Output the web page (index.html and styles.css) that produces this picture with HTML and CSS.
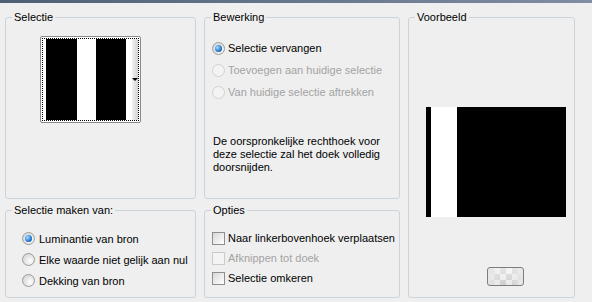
FILE: index.html
```html
<!DOCTYPE html>
<html lang="nl">
<head>
    <meta charset="UTF-8">
    <title>Selectie uit masker</title>
    <link rel="stylesheet" href="styles.css">
</head>
<body>
    <div class="titlebar"></div>

    <div class="dialog">
        <!-- Selectie -->
        <fieldset class="group">
            <legend>Selectie</legend>
            <div class="thumb">
                <div class="thumb-focus">
                    <span class="stripe black w31"></span>
                    <span class="stripe white w19"></span>
                    <span class="stripe black w30"></span>
                    <span class="stripe white w6"></span>
                    <span class="thumb-drop"><span class="arrow"></span></span>
                </div>
            </div>
        </fieldset>

        <!-- Bewerking -->
        <fieldset class="group">
            <legend>Bewerking</legend>
            <div class="choices top-13">
                <div class="choice"><span class="radio checked"></span>Selectie vervangen</div>
                <div class="choice disabled"><span class="radio"></span>Toevoegen aan huidige selectie</div>
                <div class="choice disabled"><span class="radio"></span>Van huidige selectie aftrekken</div>
            </div>
            <p class="note">De oorspronkelijke rechthoek voor deze selectie zal het doek volledig doorsnijden.</p>
        </fieldset>

        <!-- Voorbeeld -->
        <fieldset class="group preview-group">
            <legend>Voorbeeld</legend>
            <div class="preview">
                <span class="preview-stripe"></span>
            </div>
            <div class="swatch-btn"></div>
        </fieldset>

        <!-- Selectie maken van -->
        <fieldset class="group">
            <legend>Selectie maken van:</legend>
            <div class="choices source">
                <div class="choice"><span class="radio checked"></span>Luminantie van bron</div>
                <div class="choice"><span class="radio"></span>Elke waarde niet gelijk aan nul</div>
                <div class="choice"><span class="radio"></span>Dekking van bron</div>
            </div>
        </fieldset>

        <!-- Opties -->
        <fieldset class="group">
            <legend>Opties</legend>
            <div class="choices checks">
                <div class="choice"><span class="check"></span>Naar linkerbovenhoek verplaatsen</div>
                <div class="choice disabled"><span class="check"></span>Afknippen tot doek</div>
                <div class="choice"><span class="check"></span>Selectie omkeren</div>
            </div>
        </fieldset>
    </div>
</body>
</html>
```

FILE: styles.css
```css
/* General */
body {
    margin: 0;
    background: #efefef;
    font-family: "Liberation Sans", Arial, sans-serif;
    font-size: 11px;
    color: #000;
}

.titlebar {
    height: 3px;
    background: linear-gradient(to right, #4f5f74, #7f8ea2);
}

/* Dialog layout */
.dialog {
    display: grid;
    grid-template-columns: 191px 196px 167px;
    grid-template-rows: 188px 94px;
    column-gap: 8px;
    row-gap: 5px;
    padding: 8px 0 0 5px;
}

.group {
    margin: 0;
    padding: 0;
    min-width: 0;
    border: 1px solid #cbd3db;
    border-radius: 3px;
}

.group legend {
    margin-left: 6px;
    padding: 0 2px;
    line-height: 13px;
}

.preview-group {
    grid-column: 3;
    grid-row: 1 / span 2;
}

/* Selectie thumbnail */
.thumb {
    width: 101px;
    height: 87px;
    box-sizing: border-box;
    margin: 12px 0 0 34px;
    padding: 1px;
    border: 1px solid #8a8a8a;
    border-radius: 2px;
    background: #fff;
}

.thumb-focus {
    display: flex;
    height: 100%;
    box-sizing: border-box;
    padding-left: 3px;
    border: 1px dotted #000;
}

.stripe { height: 100%; }
.stripe.black { background: #000; }
.stripe.white { background: #fff; }
.w31 { width: 31px; }
.w30 { width: 30px; }
.w19 { width: 19px; }
.w6 { width: 6px; }

.thumb-drop {
    width: 6px;
    display: flex;
    align-items: center;
    justify-content: center;
    background: linear-gradient(to right, #f2f2f2, #d2d2d2);
}

.arrow {
    width: 0;
    height: 0;
    border-left: 3px solid transparent;
    border-right: 3px solid transparent;
    border-top: 3px solid #000;
}

/* Radio and check rows */
.choices { padding-left: 7px; }
.top-13 { margin-top: 13px; }
.source { margin-top: 11px; padding-left: 16px; }
.checks { margin-top: 11px; }

.choice {
    display: flex;
    align-items: center;
    gap: 3px;
    height: 22px;
    white-space: nowrap;
}

.source .choice { height: 21px; gap: 4px; }
.checks .choice { height: 20px; }

.choice.disabled { color: #a3a3a3; }

.radio {
    width: 13px;
    height: 13px;
    box-sizing: border-box;
    border: 1px solid #9c9c9c;
    border-radius: 50%;
    background: radial-gradient(circle at 65% 65%, #ffffff, #e2e2e2 55%, #cfcfcf);
    display: flex;
    align-items: center;
    justify-content: center;
}

.radio.checked::after {
    content: "";
    width: 7px;
    height: 7px;
    border-radius: 50%;
    background: radial-gradient(circle at 35% 35%, #a6deff, #2a7fd6 55%, #0b4c9c 85%, rgba(11, 76, 156, 0.4));
}

.disabled .radio {
    border-color: #d2d2d2;
    background: #f3f3f3;
}

.check {
    width: 13px;
    height: 13px;
    box-sizing: border-box;
    border: 1px solid #8f8f8f;
    background: linear-gradient(135deg, #d6d6d6, #f4f4f4 70%, #fff);
}

.disabled .check {
    border-color: #cbcbcb;
    background: #f4f4f4;
}

.note {
    width: 172px;
    margin: 32px 0 0 8px;
    line-height: 13px;
}

/* Voorbeeld */
.preview {
    display: flex;
    width: 140px;
    height: 110px;
    margin: 83px 0 0 17px;
    background: #000;
}

.preview-stripe {
    width: 26px;
    margin-left: 5px;
    background: #fff;
}

.swatch-btn {
    width: 37px;
    height: 19px;
    box-sizing: border-box;
    margin: 50px 0 0 78px;
    border: 1px solid #7d7d7d;
    border-radius: 3px;
    background:
        linear-gradient(to right, #e6e6e6, rgba(230, 230, 230, 0) 35%, rgba(230, 230, 230, 0) 65%, #e6e6e6),
        linear-gradient(to bottom, rgba(240, 240, 240, 0.6), rgba(200, 200, 200, 0.4)),
        repeating-conic-gradient(#ffffff 0 25%, #d4d4d4 0 50%) 0 0 / 12px 12px;
}
```
